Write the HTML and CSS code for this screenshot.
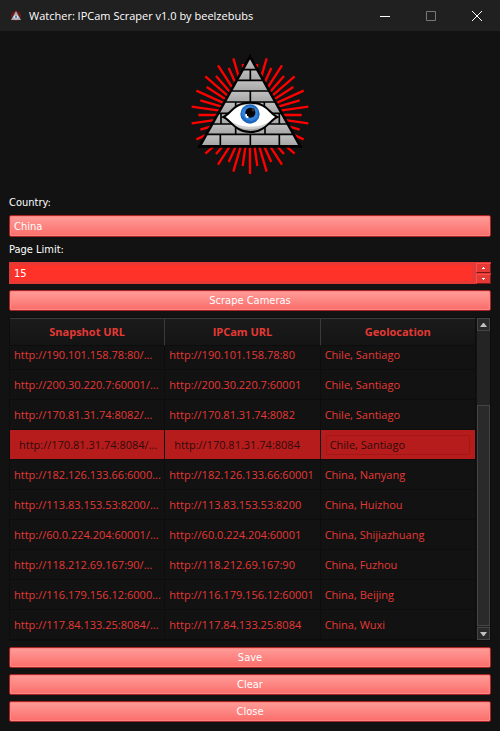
FILE: index.html
```
<!DOCTYPE html>
<html lang="en">

<head>
  <meta charset="utf-8">
  <title>Watcher: IPCam Scraper v1.0 by beelzebubs</title>
  <link rel="stylesheet" href="styles.css">
</head>

<body>
  <header class="titlebar">
    <svg class="titlebar-icon" viewBox="0 0 12 12">
      <circle cx="6" cy="6" r="5" fill="#6b1414" />
      <path d="M6 1L11 10H1z" fill="#a9a9a9" />
      <ellipse cx="6" cy="7" rx="2.5" ry="1.5" fill="#dfe6ee" />
      <circle cx="6" cy="7" r="1" fill="#1f5fae" />
    </svg>
    <h1 class="titlebar-text">Watcher: IPCam Scraper v1.0 by beelzebubs</h1>
    <button class="titlebar-button" aria-label="Minimize">
      <svg viewBox="0 0 10 10"><path d="M0 5.5H10" stroke="#fff" /></svg>
    </button>
    <button class="titlebar-button" aria-label="Maximize" disabled>
      <svg viewBox="0 0 10 10"><path d="M.5 .5H9.5V9.5H.5z" stroke="#777" fill="none" /></svg>
    </button>
    <button class="titlebar-button" aria-label="Close window">
      <svg viewBox="0 0 10 10"><path d="M0 0L10 10M10 0L0 10" stroke="#fff" /></svg>
    </button>
  </header>

  <main class="watcher">
    <svg class="logo" viewBox="0 0 390 390">
      <defs>
        <linearGradient id="stone" x1="0" y1="0" x2="0" y2="1">
          <stop offset="0" stop-color="#c0c0c0" />
          <stop offset="1" stop-color="#a6a6a6" />
        </linearGradient>
        <pattern id="bricks" width="390" height="32.5" y="59" patternUnits="userSpaceOnUse">
          <rect width="390" height="33" fill="url(#stone)" />
        </pattern>
        <clipPath id="pyramid"><path d="M195 18L346 290H44z" /></clipPath>
        <clipPath id="eye"><path d="M115 201C138 192 145 158 196 158S254 192 277 201C254 210 243 246 196 246S138 210 115 201z" /></clipPath>
      </defs>
      <!-- rays, 22 long and 22 short, drawn as diameters -->
      <g stroke="#ff0000" stroke-width="7">
        <path d="M195 18V372M145 25L245 365M99 46L291 344M61 79L329 311M34 122L356 268M20 170L370 220M20 220L370 170M34 268L356 122M61 311L329 79M99 344L291 46M145 365L245 25" />
        <path d="M40 195H350M46 151L344 239M65 111L325 279M93 78L297 312M131 54L259 336M173 42L217 348M217 42L173 348M259 54L131 336M297 78L93 312M325 111L65 279M344 151L46 239" />
      </g>
      <path d="M195 20L346 289H44z" fill="url(#bricks)" stroke="#000" stroke-width="8" />
      <g clip-path="url(#pyramid)" stroke="#000" stroke-width="5">
        <path d="M0 59H390M0 91H390M0 123H390M0 156H390M0 190H390M0 222H390M0 253H390" />
        <path d="M196 59V91M196 123V156M152 156V190M238 156V190M108 190V222M283 190V222M152 222V253M240 222V253M106 253V290M196 253V290M283 253V290" />
      </g>
      <g clip-path="url(#eye)">
        <path d="M110 150H282V250H110z" fill="#fff" />
        <path d="M115 201C138 210 150 230 196 230S254 210 277 201V250H115z" fill="#d0d0d0" />
        <path d="M115 201C138 218 150 237 196 237S254 218 277 201V250H115z" fill="#aaa" />
        <path d="M140 180Q167 164 196 164Q225 164 250 180L240 150H150z" fill="#ccc" />
      </g>
      <path d="M115 201C138 192 145 158 196 158S254 192 277 201C254 210 243 246 196 246S138 210 115 201z" fill="none" stroke="#000" stroke-width="6" />
      <circle cx="195" cy="192" r="29" fill="#1d66bd" />
      <path d="M170 192A25 23 0 0 1 207 171L218 180V203L200 214L182 208z" fill="#3183dc" />
      <circle cx="196" cy="188" r="15" fill="#050505" />
      <path d="M200 174H208V184H200z" fill="#333" />
      <path d="M181 192H186V198H190V204H184V200H181z" fill="#fff" />
    </svg>

    <label class="field-label" for="country">Country:</label>
    <select class="country" id="country">
      <option>China</option>
      <option>Chile</option>
    </select>

    <label class="field-label" for="page-limit">Page Limit:</label>
    <div class="spinner">
      <input type="number" id="page-limit" value="15" min="1">
      <div class="spinner-buttons">
        <button aria-label="Increase"><svg viewBox="0 0 3 2"><path d="M1 0H2V1H3V2H0V1H1z" /></svg></button>
        <button aria-label="Decrease"><svg viewBox="0 0 3 2"><path d="M0 0H3V1H2V2H1V1H0z" /></svg></button>
      </div>
    </div>

    <button class="action">Scrape Cameras</button>

    <div class="results">
      <table class="camera-table">
        <thead>
          <tr>
            <th>Snapshot URL</th>
            <th>IPCam URL</th>
            <th>Geolocation</th>
          </tr>
        </thead>
        <tbody>
          <tr class="row-clipped">
            <td>http://190.101.158.78:80/...</td>
            <td>http://190.101.158.78:80</td>
            <td>Chile, Santiago</td>
          </tr>
          <tr>
            <td>http://200.30.220.7:60001/...</td>
            <td>http://200.30.220.7:60001</td>
            <td>Chile, Santiago</td>
          </tr>
          <tr>
            <td>http://170.81.31.74:8082/...</td>
            <td>http://170.81.31.74:8082</td>
            <td>Chile, Santiago</td>
          </tr>
          <tr class="row-selected">
            <td>http://170.81.31.74:8084/...</td>
            <td>http://170.81.31.74:8084</td>
            <td class="cell-focused"><div>Chile, Santiago</div></td>
          </tr>
          <tr>
            <td>http://182.126.133.66:6000...</td>
            <td>http://182.126.133.66:60001</td>
            <td>China, Nanyang</td>
          </tr>
          <tr>
            <td>http://113.83.153.53:8200/...</td>
            <td>http://113.83.153.53:8200</td>
            <td>China, Huizhou</td>
          </tr>
          <tr>
            <td>http://60.0.224.204:60001/...</td>
            <td>http://60.0.224.204:60001</td>
            <td>China, Shijiazhuang</td>
          </tr>
          <tr>
            <td>http://118.212.69.167:90/...</td>
            <td>http://118.212.69.167:90</td>
            <td>China, Fuzhou</td>
          </tr>
          <tr>
            <td>http://116.179.156.12:6000...</td>
            <td>http://116.179.156.12:60001</td>
            <td>China, Beijing</td>
          </tr>
          <tr>
            <td>http://117.84.133.25:8084/...</td>
            <td>http://117.84.133.25:8084</td>
            <td>China, Wuxi</td>
          </tr>
        </tbody>
      </table>
      <div class="scrollbar">
        <button aria-label="Scroll up"><svg viewBox="0 0 7 4"><path d="M3 0H4L7 4H0z" /></svg></button>
        <div class="scrollbar-track"><div class="scrollbar-handle"></div></div>
        <button aria-label="Scroll down"><svg viewBox="0 0 7 4"><path d="M0 0H7L4 4H3z" /></svg></button>
      </div>
    </div>

    <button class="action">Save</button>
    <button class="action">Clear</button>
    <button class="action">Close</button>
  </main>
</body>

</html>
```
FILE: styles.css
```
* { box-sizing: border-box; }

body {
  margin: 0;
  min-height: 100vh;
  display: flex;
  flex-direction: column;
  background: #121212;
  color: #fff;
  font-family: "DejaVu Sans Condensed", "DejaVu Sans", sans-serif;
  font-size: 11px;
}

button, input, select {
  margin: 0;
  padding: 0;
  font: inherit;
  color: inherit;
}

/* title bar */
.titlebar {
  display: flex;
  align-items: center;
  height: 31px;
  padding-left: 10px;
  background: #202020;
}

.titlebar-icon {
  width: 12px;
  height: 12px;
}

.titlebar-text {
  flex: 1;
  margin: 0 0 0 7px;
  font-family: "Open Sans", sans-serif;
  font-size: 11px;
  font-weight: 400;
  white-space: nowrap;
}

.titlebar-button {
  display: flex;
  align-items: center;
  justify-content: center;
  width: 46px;
  height: 31px;
  border: none;
  background: none;
}

.titlebar-button svg {
  width: 10px;
  height: 10px;
}

/* form */
.watcher {
  flex: 1;
  display: flex;
  flex-direction: column;
  gap: 6px;
  padding: 19px 9px 9px;
}

.logo {
  align-self: center;
  width: 130px;
  height: 130px;
  margin-bottom: 10px;
}

.field-label {
  line-height: 13px;
}

.country, .action {
  border: 1px solid #a82525;
  border-radius: 2px;
  background: linear-gradient(#ff9d99, #fa6d6a);
  box-shadow: inset 0 0 0 1px #ff8683;
}

.country {
  appearance: none;
  width: 100%;
  height: 22px;
  padding: 0 4px;
}

.action {
  height: 21px;
}

.spinner {
  display: flex;
  height: 22px;
  background: #e53935;
}

.spinner input {
  appearance: textfield;
  flex: 1;
  min-width: 0;
  margin: 3px;
  padding: 0 2px;
  border: none;
  outline: none;
  background: #ff3229;
}

.spinner input::-webkit-inner-spin-button {
  appearance: none;
}

.spinner-buttons {
  display: flex;
  flex-direction: column;
  gap: 1px;
  width: 16px;
  padding: 1px 0 0 1px;
}

.spinner-buttons button {
  flex: 1;
  display: flex;
  align-items: center;
  justify-content: center;
  border: 1px solid #ff4b45;
  border-right-color: #7a1717;
  border-bottom-color: #7a1717;
  background: #e53935;
}

.spinner-buttons svg {
  width: 3px;
  height: 2px;
  fill: #fff;
}

/* results */
.results {
  flex: 1;
  display: flex;
  align-items: stretch;
  border: 1px solid #0d0d0d;
}

.camera-table {
  flex: 1;
  align-self: flex-start;
  width: 100%;
  table-layout: fixed;
  border-collapse: separate;
  border-spacing: 0;
  color: #e53935;
  font-family: "Open Sans", sans-serif;
  font-size: 11px;
  line-height: 18px;
}

.camera-table th {
  height: 28px;
  padding: 0;
  border-top: 1px solid #3a3a3a;
  border-right: 1px solid #3a3a3a;
  border-bottom: 1px solid #0d0d0d;
  background: linear-gradient(#1b1b1b, #141414);
  font-weight: 700;
}

.camera-table th:last-child {
  border-right-color: #0d0d0d;
}

.camera-table td {
  height: 30px;
  padding: 6px 0 5px 4px;
  border-right: 1px solid #0d0d0d;
  border-bottom: 1px solid #0d0d0d;
  white-space: nowrap;
  overflow: hidden;
}

/* top row is scrolled partly under the header */
.camera-table .row-clipped td {
  height: 24px;
  padding-top: 0;
}

.camera-table .row-selected td {
  padding-left: 9px;
  background: #b71c1c;
  color: #2e0c0c;
}

.camera-table .row-selected .cell-focused {
  padding: 5px 5px 4px;
}

.cell-focused div {
  padding-left: 3px;
  border: 1px solid #a51717;
  border-radius: 2px;
}

.scrollbar {
  display: flex;
  flex-direction: column;
  flex-shrink: 0;
  width: 14px;
  padding-left: 1px;
}

.scrollbar button, .scrollbar-handle {
  border: 1px solid #454545;
  background: #2a2a2a;
}

.scrollbar button {
  display: flex;
  align-items: center;
  justify-content: center;
  height: 13px;
}

.scrollbar svg {
  width: 7px;
  height: 4px;
  fill: #c0c0c0;
}

.scrollbar-track {
  flex: 1;
  display: flex;
  flex-direction: column;
  justify-content: flex-end;
  padding-bottom: 1px;
  background: #242424;
}

.scrollbar-handle {
  height: 75%;
}
```
